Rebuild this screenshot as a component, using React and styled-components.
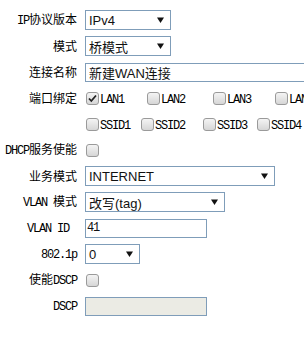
import styled, { createGlobalStyle } from "styled-components";

const GlobalStyle = createGlobalStyle`
  html, body {
    margin: 0;
    padding: 0;
    background: #fff;
    overflow: hidden;
  }
  body {
    font-family: "Noto Sans CJK SC", sans-serif;
    font-size: 12px;
    color: #000;
  }
`;

const Form = styled.div`
  padding-top: 7px;
  width: 304px;
`;

const Row = styled.div`
  display: flex;
  align-items: center;
  height: 26px;
`;

const Label = styled.div`
  width: 77px;
  flex-shrink: 0;
  margin-right: 8px;
  padding-right: ${(p) => p.$pad || 0}px;
  box-sizing: border-box;
  text-align: right;
  white-space: nowrap;
  font-family: "Noto Sans CJK SC", sans-serif;
  font-size: 12px;
  line-height: 14px;
`;

const Mono = styled.span`
  font-family: "Liberation Mono", monospace;
  font-size: 12px;
  letter-spacing: -1.2px;
`;

const Select = styled.div`
  width: ${(p) => p.$w}px;
  height: 20px;
  box-sizing: border-box;
  border: 1px solid #7f9db9;
  background: #fff;
  display: flex;
  align-items: center;
  justify-content: space-between;
  padding: 0 6px 0 3px;
  font-family: "Liberation Sans", "Noto Sans CJK SC", sans-serif;
  font-size: 13px;
  color: #111;
  flex-shrink: 0;
`;

const Input = styled.div`
  width: ${(p) => p.$w}px;
  height: 19px;
  box-sizing: border-box;
  border: 1px solid #7f9db9;
  background: ${(p) => (p.$disabled ? "#ebebe4" : "#fff")};
  display: flex;
  align-items: center;
  padding-left: ${(p) => p.$pad ?? 3}px;
  font-family: "Liberation Sans", "Noto Sans CJK SC", sans-serif;
  font-size: 13px;
  color: #111;
  flex-shrink: 0;
  white-space: nowrap;
`;

const Checks = styled.div`
  display: flex;
  align-items: center;
  padding-left: 1px;
`;

const CheckItem = styled.div`
  display: flex;
  align-items: center;
  width: ${(p) => (p.$w ? `${p.$w}px` : "auto")};
  flex-shrink: 0;
  white-space: nowrap;
`;

const Box = styled.span`
  width: 11px;
  height: 11px;
  border: 1px solid #9a9a9a;
  border-radius: 3px;
  background: linear-gradient(#f4f4f4, #d6d6d6);
  display: inline-flex;
  align-items: center;
  justify-content: center;
  margin: ${(p) => (p.$solo ? "0 0 0 1px" : "0 1px 0 0")};
`;

const CheckText = styled(Mono)`
  margin-top: 3px;
`;

function Arrow() {
  return (
    <svg width="7" height="6" viewBox="0 0 7 6">
      <path d="M0 0.5h7L3.5 6z" fill="#111" />
    </svg>
  );
}

function Check({ checked, solo }) {
  return (
    <Box $solo={solo}>
      {checked && (
        <svg width="9" height="9" viewBox="0 0 9 9">
          <path
            d="M1 4.5l2.3 2.5L8 1.5"
            fill="none"
            stroke="#222"
            strokeWidth="1.8"
          />
        </svg>
      )}
    </Box>
  );
}

const lans = [
  { name: "LAN1", w: 61, checked: true },
  { name: "LAN2", w: 66 },
  { name: "LAN3", w: 62 },
  { name: "LAN4" },
];

const ssids = [
  { name: "SSID1", w: 55 },
  { name: "SSID2", w: 62 },
  { name: "SSID3", w: 54 },
  { name: "SSID4" },
];

function CheckRow({ items }) {
  return (
    <Checks>
      {items.map((it) => (
        <CheckItem key={it.name} $w={it.w}>
          <Check checked={it.checked} />
          <CheckText>{it.name}</CheckText>
        </CheckItem>
      ))}
    </Checks>
  );
}

export default function App() {
  return (
    <>
      <GlobalStyle />
      <Form>
        <Row>
          <Label>
            <Mono>IP</Mono>协议版本
          </Label>
          <Select $w={86}>
            <span>IPv4</span>
            <Arrow />
          </Select>
        </Row>
        <Row>
          <Label>模式</Label>
          <Select $w={86}>
            <span>桥模式</span>
            <Arrow />
          </Select>
        </Row>
        <Row>
          <Label>连接名称</Label>
          <Input $w={240}>新建WAN连接</Input>
        </Row>
        <Row>
          <Label>端口绑定</Label>
          <CheckRow items={lans} />
        </Row>
        <Row>
          <Label />
          <CheckRow items={ssids} />
        </Row>
        <Row>
          <Label>
            <Mono>DHCP</Mono>服务使能
          </Label>
          <Check solo />
        </Row>
        <Row>
          <Label>业务模式</Label>
          <Select $w={190}>
            <span>INTERNET</span>
            <Arrow />
          </Select>
        </Row>
        <Row>
          <Label>
            <Mono>VLAN </Mono>模式
          </Label>
          <Select $w={140}>
            <span>改写(tag)</span>
            <Arrow />
          </Select>
        </Row>
        <Row>
          <Label $pad={8}>
            <Mono>VLAN ID</Mono>
          </Label>
          <Input $w={122} $pad={1}>
            <Mono>41</Mono>
          </Input>
        </Row>
        <Row>
          <Label>
            <Mono>802.1p</Mono>
          </Label>
          <Select $w={55}>
            <span>0</span>
            <Arrow />
          </Select>
        </Row>
        <Row>
          <Label>
            使能<Mono>DSCP</Mono>
          </Label>
          <Check solo />
        </Row>
        <Row>
          <Label>
            <Mono>DSCP</Mono>
          </Label>
          <Input $w={122} $disabled />
        </Row>
      </Form>
    </>
  );
}
